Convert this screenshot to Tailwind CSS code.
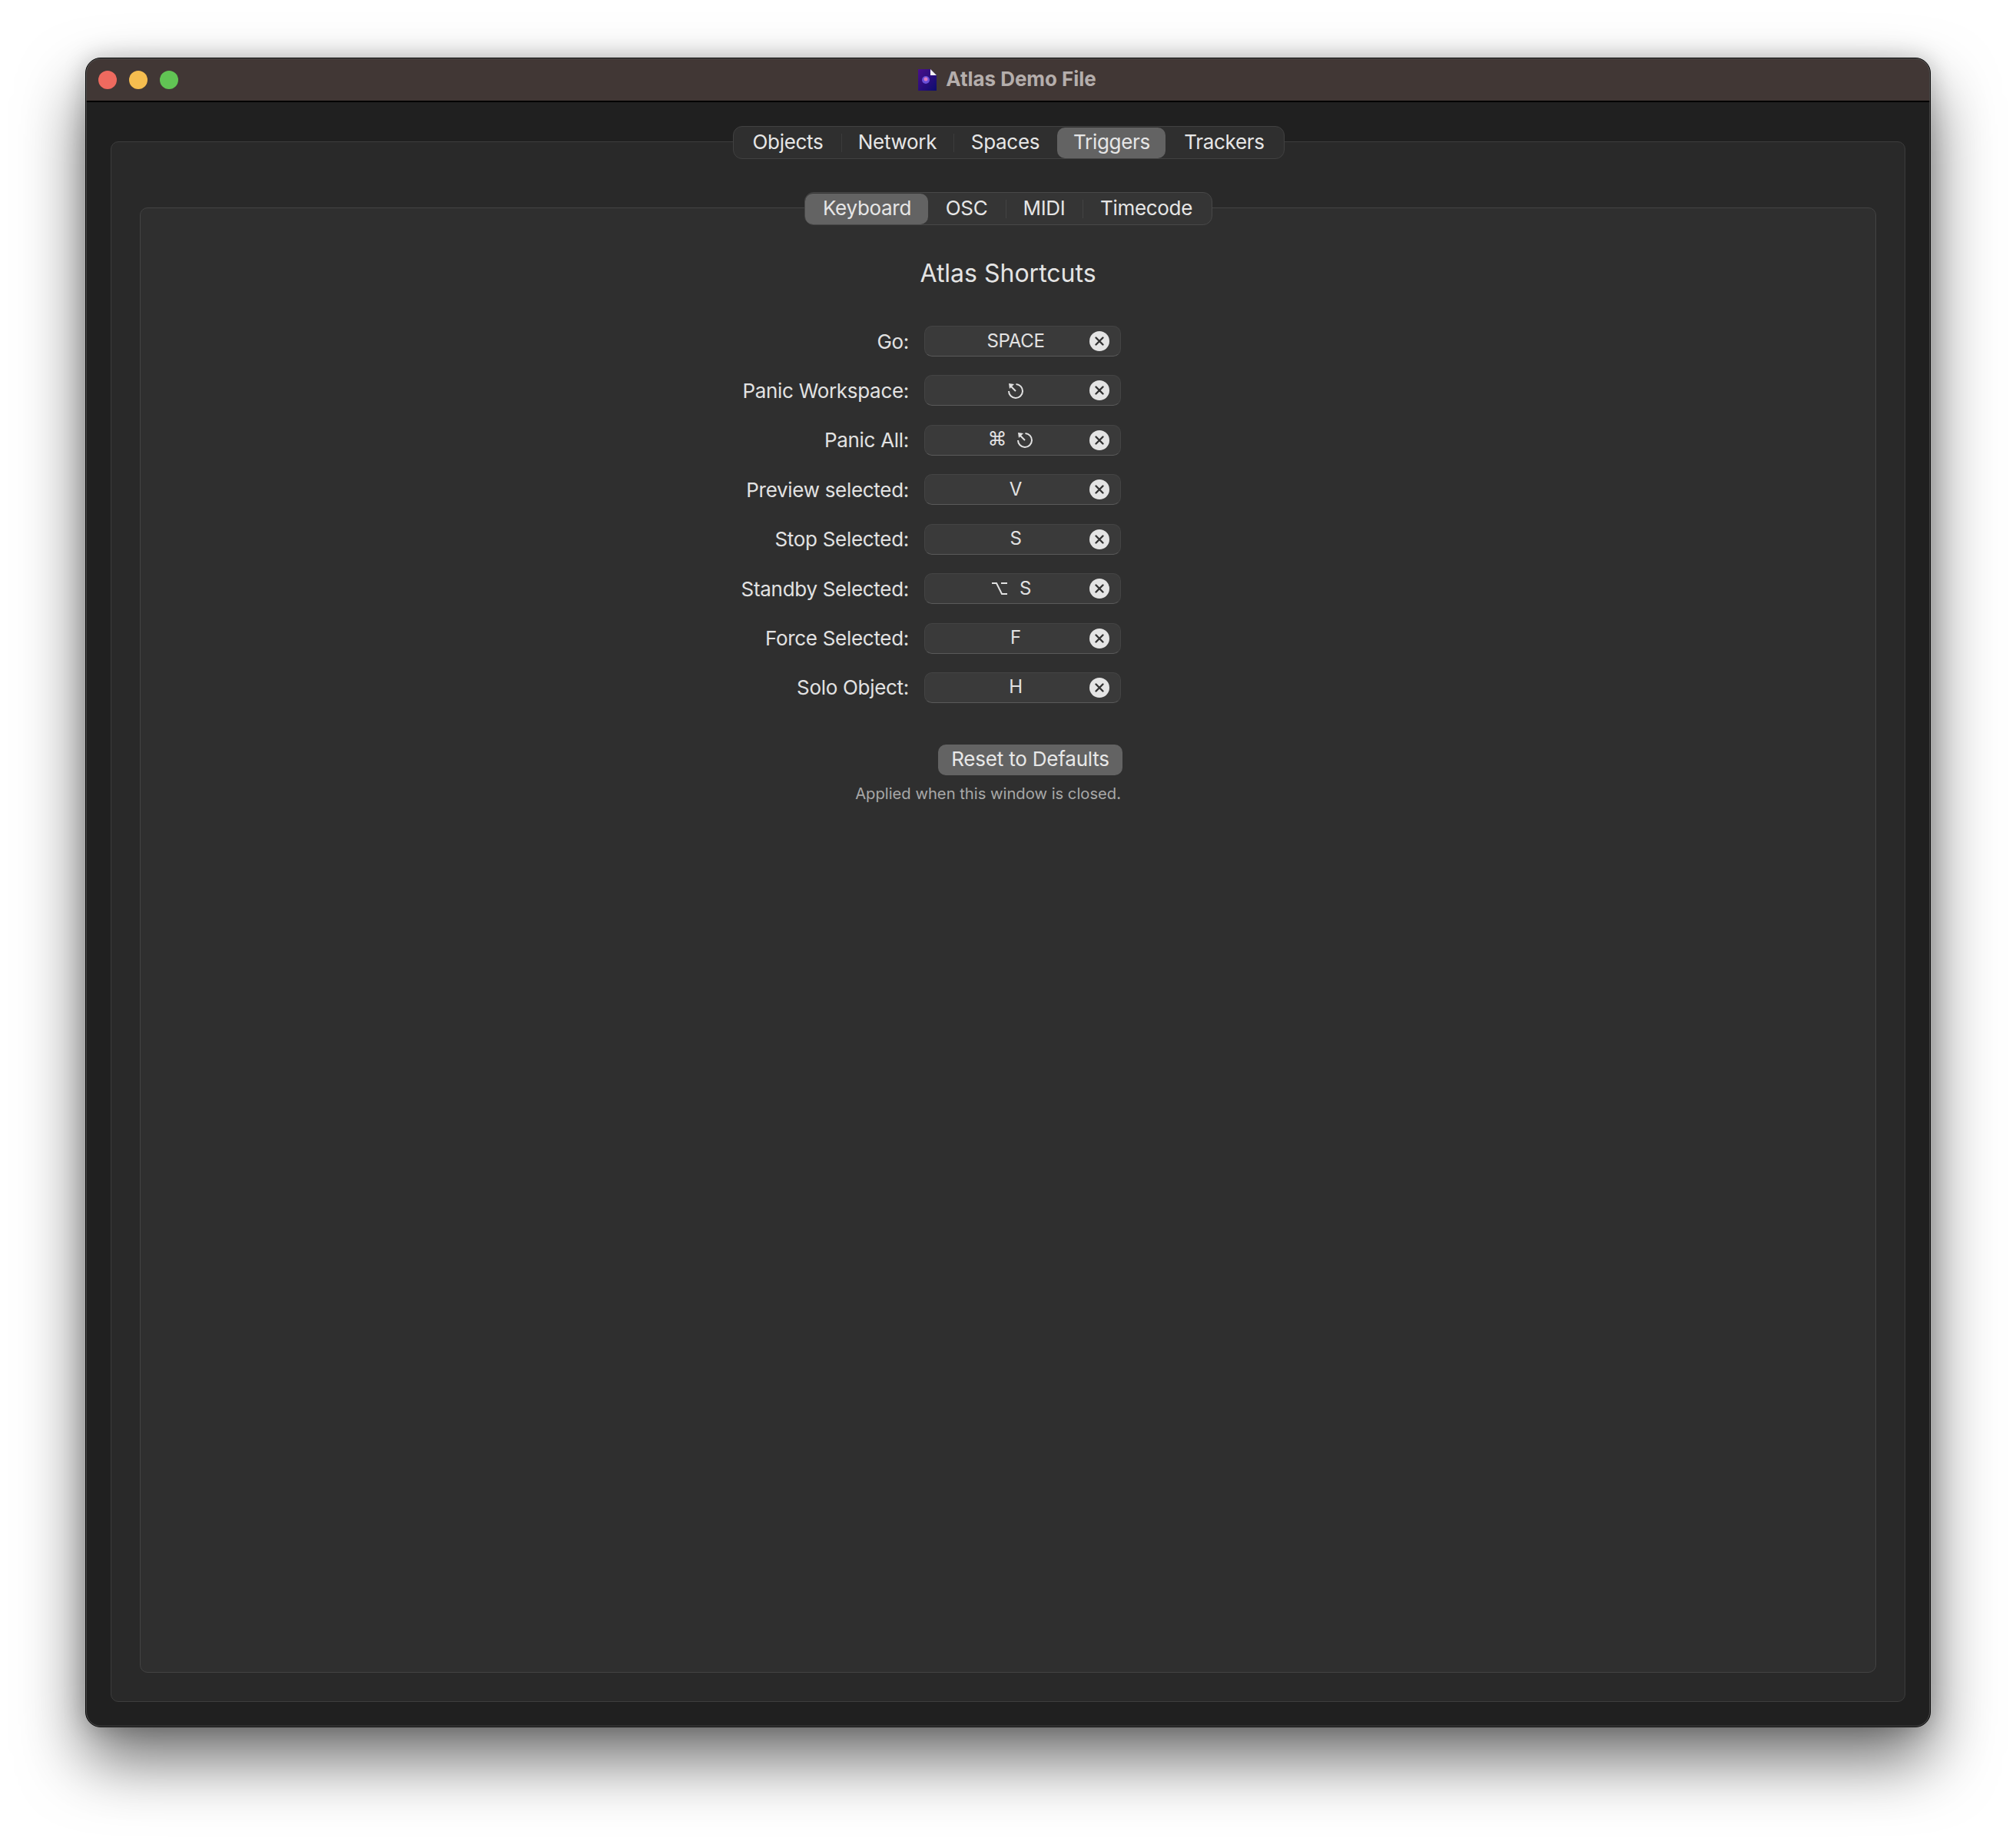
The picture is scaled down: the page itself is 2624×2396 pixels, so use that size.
<!DOCTYPE html>
<html lang="en">
<head>
    <meta charset="UTF-8">
    <title>Atlas Demo File</title>
    <script src="https://cdn.jsdelivr.net/npm/@tailwindcss/browser@4"></script>
</head>
<body class="bg-white w-[2624px] h-[2396px] pl-[111px] pt-[75px] font-['Inter','Liberation_Sans',sans-serif] overflow-hidden">
    <div class="relative w-[2402px] h-[2173px] flex flex-col rounded-[20px] border border-black bg-[#202020] shadow-[0_42px_84px_rgba(0,0,0,0.58),0_0_30px_rgba(0,0,0,0.2)]">
        <!-- title bar -->
        <div class="relative h-[57px] shrink-0 flex items-center justify-center gap-[12px] pr-[2px] bg-[#413735] border-b-2 border-black rounded-t-[19px]">
            <div class="absolute left-[16px] top-[16px] flex gap-[16px]">
                <div class="w-[24px] h-[24px] rounded-full bg-[#ee6a5f]"></div>
                <div class="w-[24px] h-[24px] rounded-full bg-[#f5bd4f]"></div>
                <div class="w-[24px] h-[24px] rounded-full bg-[#61c454]"></div>
            </div>
            <svg width="24" height="28" viewBox="0 0 24 28">
                <defs>
                    <linearGradient id="doc" x1="0" y1="0" x2="1" y2="1">
                        <stop offset="0" stop-color="#4a0f8c"/>
                        <stop offset="1" stop-color="#0c0c6e"/>
                    </linearGradient>
                </defs>
                <path d="M0 0H16L24 8V28H0Z" fill="url(#doc)"/>
                <path d="M16 0L24 8H16Z" fill="#f2f2f2"/>
                <circle cx="10" cy="14" r="5" fill="#6a4fd8"/>
                <circle cx="10" cy="13" r="2.5" fill="#e07ac0"/>
            </svg>
            <span class="text-[26px] leading-[36px] pb-[2px] font-bold tracking-[-0.05px] text-[#b5aeac]">Atlas Demo File</span>
        </div>

        <!-- window body -->
        <div class="flex-1 flex flex-col px-[32px] pt-[51px] pb-[32px]">
            <div class="flex-1 flex flex-col rounded-[10px] border border-[#3d3d3d] bg-[#292929] px-[37px] pb-[37px]">
                <div class="flex justify-center -mt-[21px] text-[26px] leading-[36px] tracking-[-0.3px] text-[#e6e6e6]">
                    <div class="flex items-center h-[43px] ml-[1px] rounded-[12px] border border-[#414141] bg-[#2f2f2f]">
                        <div class="w-[140px] pl-[2px] pb-[2px] text-center">Objects</div>
                        <div class="w-px h-[24px] bg-[#3c3c3c]"></div>
                        <div class="w-[145px] pb-[2px] text-center">Network</div>
                        <div class="w-px h-[24px] bg-[#3c3c3c]"></div>
                        <div class="w-[134px] pb-[2px] text-center">Spaces</div>
                        <div class="w-[141px] h-[40px] pl-[2px] leading-[38px] text-center rounded-[10px] bg-[#636363]">Triggers</div>
                        <div class="w-[154px] pb-[2px] text-center">Trackers</div>
                    </div>
                </div>

                <div class="flex-1 flex flex-col mt-[63px] rounded-[10px] border border-[#434343] bg-[#2f2f2f]">
                    <div class="flex justify-center -mt-[21px] text-[26px] leading-[36px] tracking-[-0.3px] text-[#e6e6e6]">
                        <div class="flex items-center h-[43px] rounded-[12px] border border-[#484848] bg-[#353535]">
                            <div class="w-[160px] h-[40px] pl-[2px] leading-[38px] text-center rounded-[10px] bg-[#636363]">Keyboard</div>
                            <div class="w-[101px] pb-[2px] text-center">OSC</div>
                            <div class="w-px h-[24px] bg-[#434343]"></div>
                            <div class="w-[99px] pb-[2px] text-center">MIDI</div>
                            <div class="w-px h-[24px] bg-[#434343]"></div>
                            <div class="w-[167px] pr-[2px] pb-[2px] text-center">Timecode</div>
                        </div>
                    </div>

                    <h1 class="mt-[41px] h-[44px] text-center text-[32px] leading-[44px] text-[#e4e4e4]">Atlas Shortcuts</h1>

                    <div class="ml-[780px] w-[498px] mt-[46px] flex flex-col gap-[24.43px] text-[26px] leading-[36px] tracking-[-0.3px] text-[#e2e2e2]">
                        <div class="flex items-center">
                            <div class="w-[240px] pr-[20px] pt-[1px] text-right whitespace-nowrap">Go:</div>
                            <div class="relative w-[256px] h-[40px] flex items-center justify-center pr-[18px] pb-[1px] rounded-[10px] border border-[#444] border-b-[#5a5a5a] bg-[#3a3a3a] text-[24px]">
                                SPACE
                                <div class="absolute right-[14px] top-[6px] w-[26px] h-[26px] rounded-full bg-[#e4e4e4] flex items-center justify-center"><svg width="14" height="14" viewBox="0 0 14 14"><path d="M2.5 2.5L11.5 11.5M11.5 2.5L2.5 11.5" stroke="#333" stroke-width="2.4" stroke-linecap="round"/></svg></div>
                            </div>
                        </div>
                        <div class="flex items-center">
                            <div class="w-[240px] pr-[20px] pt-[1px] text-right whitespace-nowrap">Panic Workspace:</div>
                            <div class="relative w-[256px] h-[40px] flex items-center justify-center pr-[18px] pb-[1px] rounded-[10px] border border-[#444] border-b-[#5a5a5a] bg-[#3a3a3a] text-[24px]">
                                <svg width="22" height="22" viewBox="0 0 22 22" fill="none" stroke="#e2e2e2" stroke-width="2"><path d="M11.5 3A9 9 0 1 1 2 12"/><path d="M11 12L4 5"/><path d="M2 2L9 3L3 9Z" fill="#e2e2e2" stroke="none"/></svg>
                                <div class="absolute right-[14px] top-[6px] w-[26px] h-[26px] rounded-full bg-[#e4e4e4] flex items-center justify-center"><svg width="14" height="14" viewBox="0 0 14 14"><path d="M2.5 2.5L11.5 11.5M11.5 2.5L2.5 11.5" stroke="#333" stroke-width="2.4" stroke-linecap="round"/></svg></div>
                            </div>
                        </div>
                        <div class="flex items-center">
                            <div class="w-[240px] pr-[20px] pt-[1px] text-right whitespace-nowrap">Panic All:</div>
                            <div class="relative w-[256px] h-[40px] flex items-center justify-center gap-[17px] pr-[32px] pb-[1px] rounded-[10px] border border-[#444] border-b-[#5a5a5a] bg-[#3a3a3a] text-[24px]">
                                <span class="font-['DejaVu_Sans'] text-[25px] w-[20px] text-center">⌘</span>
                                <svg width="22" height="22" viewBox="0 0 22 22" fill="none" stroke="#e2e2e2" stroke-width="2"><path d="M11.5 3A9 9 0 1 1 2 12"/><path d="M11 12L4 5"/><path d="M2 2L9 3L3 9Z" fill="#e2e2e2" stroke="none"/></svg>
                                <div class="absolute right-[14px] top-[6px] w-[26px] h-[26px] rounded-full bg-[#e4e4e4] flex items-center justify-center"><svg width="14" height="14" viewBox="0 0 14 14"><path d="M2.5 2.5L11.5 11.5M11.5 2.5L2.5 11.5" stroke="#333" stroke-width="2.4" stroke-linecap="round"/></svg></div>
                            </div>
                        </div>
                        <div class="flex items-center">
                            <div class="w-[240px] pr-[20px] pt-[1px] text-right whitespace-nowrap">Preview selected:</div>
                            <div class="relative w-[256px] h-[40px] flex items-center justify-center pr-[18px] pb-[1px] rounded-[10px] border border-[#444] border-b-[#5a5a5a] bg-[#3a3a3a] text-[24px]">
                                V
                                <div class="absolute right-[14px] top-[6px] w-[26px] h-[26px] rounded-full bg-[#e4e4e4] flex items-center justify-center"><svg width="14" height="14" viewBox="0 0 14 14"><path d="M2.5 2.5L11.5 11.5M11.5 2.5L2.5 11.5" stroke="#333" stroke-width="2.4" stroke-linecap="round"/></svg></div>
                            </div>
                        </div>
                        <div class="flex items-center">
                            <div class="w-[240px] pr-[20px] pt-[1px] text-right whitespace-nowrap">Stop Selected:</div>
                            <div class="relative w-[256px] h-[40px] flex items-center justify-center pr-[18px] pb-[1px] rounded-[10px] border border-[#444] border-b-[#5a5a5a] bg-[#3a3a3a] text-[24px]">
                                S
                                <div class="absolute right-[14px] top-[6px] w-[26px] h-[26px] rounded-full bg-[#e4e4e4] flex items-center justify-center"><svg width="14" height="14" viewBox="0 0 14 14"><path d="M2.5 2.5L11.5 11.5M11.5 2.5L2.5 11.5" stroke="#333" stroke-width="2.4" stroke-linecap="round"/></svg></div>
                            </div>
                        </div>
                        <div class="flex items-center">
                            <div class="w-[240px] pr-[20px] pt-[1px] text-right whitespace-nowrap">Standby Selected:</div>
                            <div class="relative w-[256px] h-[40px] flex items-center justify-center gap-[16px] pr-[29px] pb-[1px] rounded-[10px] border border-[#444] border-b-[#5a5a5a] bg-[#3a3a3a] text-[24px]">
                                <svg width="20" height="18" viewBox="0 0 20 18" fill="none" stroke="#e2e2e2" stroke-width="2"><path d="M0 2H6L13 16H20M12 2H20"/></svg>
                                <span>S</span>
                                <div class="absolute right-[14px] top-[6px] w-[26px] h-[26px] rounded-full bg-[#e4e4e4] flex items-center justify-center"><svg width="14" height="14" viewBox="0 0 14 14"><path d="M2.5 2.5L11.5 11.5M11.5 2.5L2.5 11.5" stroke="#333" stroke-width="2.4" stroke-linecap="round"/></svg></div>
                            </div>
                        </div>
                        <div class="flex items-center">
                            <div class="w-[240px] pr-[20px] pt-[1px] text-right whitespace-nowrap">Force Selected:</div>
                            <div class="relative w-[256px] h-[40px] flex items-center justify-center pr-[18px] pb-[1px] rounded-[10px] border border-[#444] border-b-[#5a5a5a] bg-[#3a3a3a] text-[24px]">
                                F
                                <div class="absolute right-[14px] top-[6px] w-[26px] h-[26px] rounded-full bg-[#e4e4e4] flex items-center justify-center"><svg width="14" height="14" viewBox="0 0 14 14"><path d="M2.5 2.5L11.5 11.5M11.5 2.5L2.5 11.5" stroke="#333" stroke-width="2.4" stroke-linecap="round"/></svg></div>
                            </div>
                        </div>
                        <div class="flex items-center">
                            <div class="w-[240px] pr-[20px] pt-[1px] text-right whitespace-nowrap">Solo Object:</div>
                            <div class="relative w-[256px] h-[40px] flex items-center justify-center pr-[18px] pb-[1px] rounded-[10px] border border-[#444] border-b-[#5a5a5a] bg-[#3a3a3a] text-[24px]">
                                H
                                <div class="absolute right-[14px] top-[6px] w-[26px] h-[26px] rounded-full bg-[#e4e4e4] flex items-center justify-center"><svg width="14" height="14" viewBox="0 0 14 14"><path d="M2.5 2.5L11.5 11.5M11.5 2.5L2.5 11.5" stroke="#333" stroke-width="2.4" stroke-linecap="round"/></svg></div>
                            </div>
                        </div>
                    </div>

                    <div class="ml-[780px] w-[498px] flex flex-col items-end">
                        <button class="mt-[54px] w-[240px] h-[40px] leading-[36px] pb-[2px] rounded-[10px] bg-[#636363] text-[26px] tracking-[-0.2px] text-[#e8e8e8]">Reset to Defaults</button>
                        <p class="mt-[10px] mr-[2px] text-[20.2px] leading-[28px] text-[#a8a8a8]">Applied when this window is closed.</p>
                    </div>
                </div>
            </div>
        </div>
        <div class="absolute inset-0 rounded-[19px] border border-[#5c5c5c]/70 pointer-events-none"></div>
    </div>
</body>
</html>
